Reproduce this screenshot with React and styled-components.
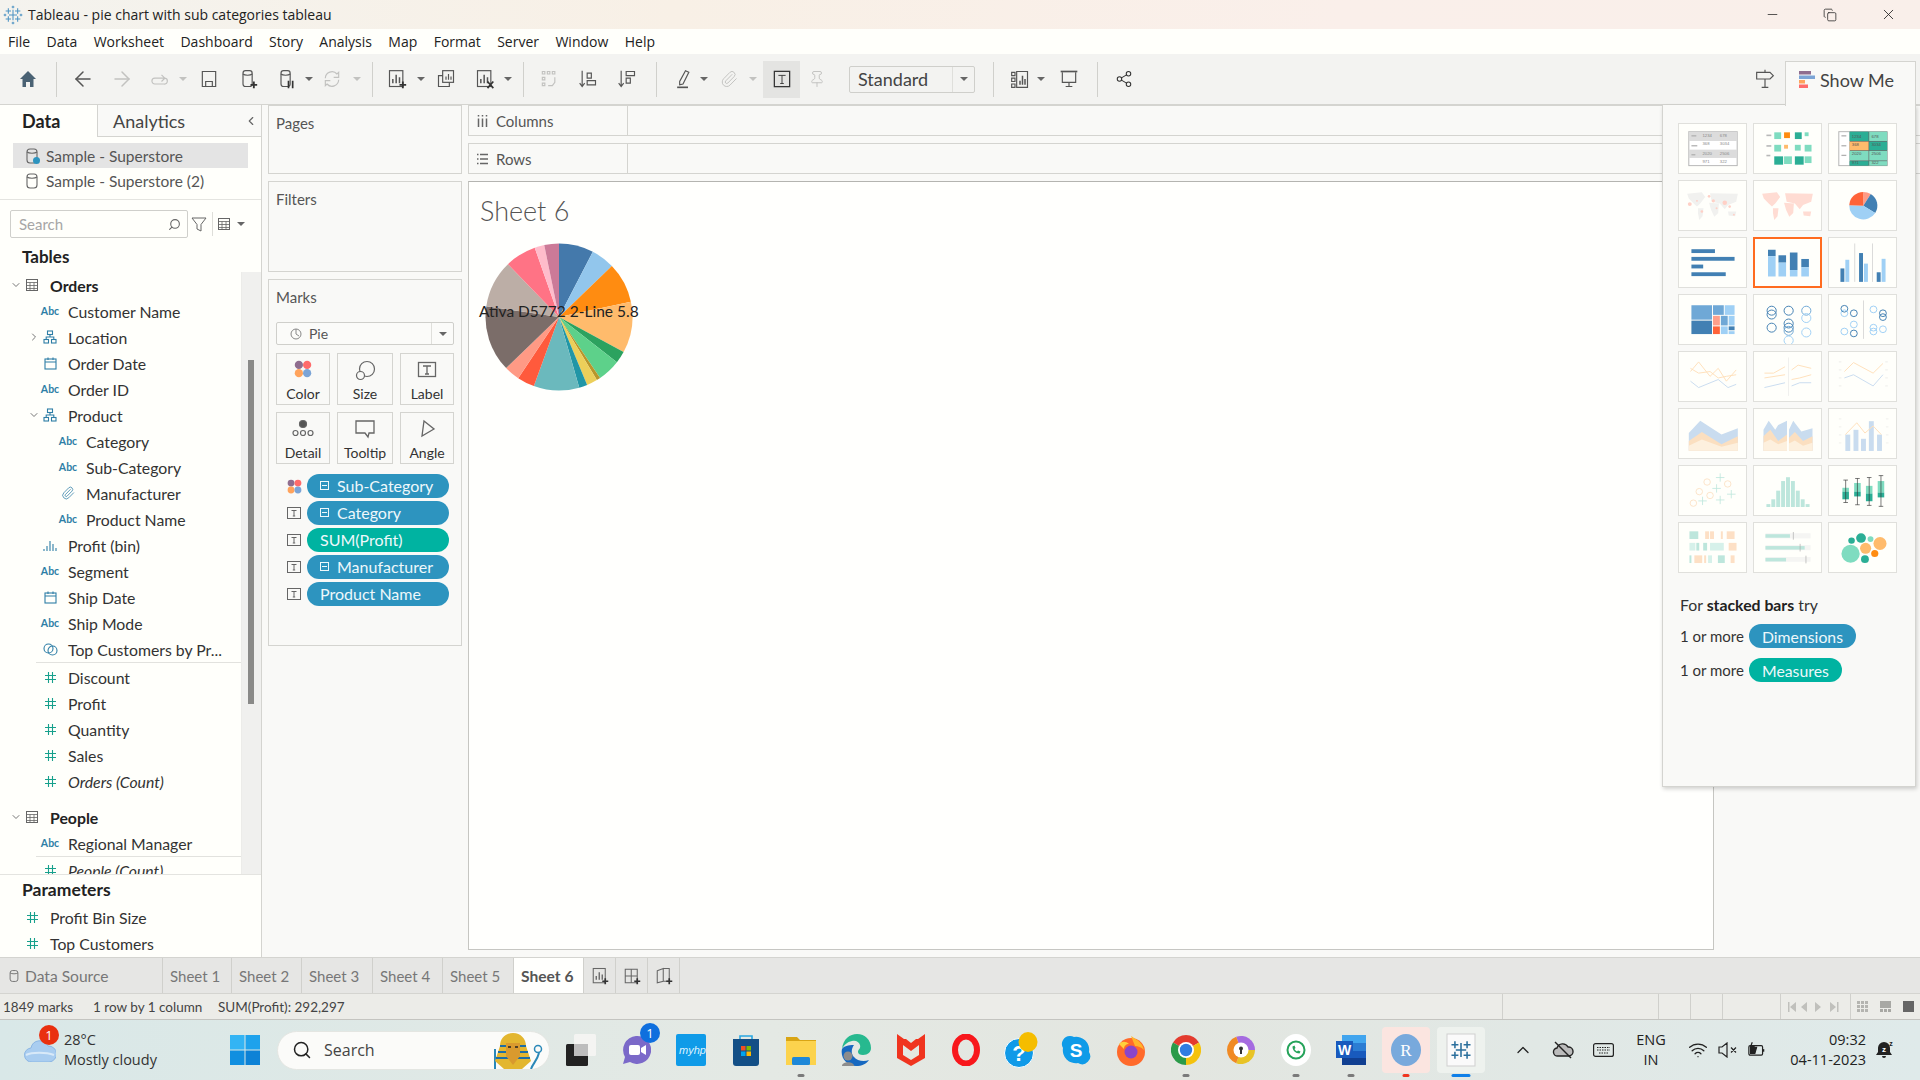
import styled, { createGlobalStyle } from "styled-components";
import {
  ArrowLeft, ArrowRight, ChevronDown, ChevronLeft, ChevronRight, ChevronUp, Copy, Minus, Paperclip,
  Pin, Search, Share2, Wifi, X,
} from "lucide-react";

const UI = `"Lato", "Liberation Sans", sans-serif`;
const SEGOE = `"Open Sans", "Liberation Sans", sans-serif`;

const GlobalStyle = createGlobalStyle`
  html, body { margin: 0; padding: 0; width: 1920px; height: 1080px; overflow: hidden; background: #f9f9f7; }
  * { box-sizing: border-box; }
  body { font-family: ${UI}; color: #333; }
`;

const Screen = styled.div`
  position: relative;
  width: 1920px;
  height: 1080px;
  display: flex;
  flex-direction: column;
  overflow: hidden;
`;

const TitleBar = styled.div`
  height: 29px;
  flex: none;
  display: flex;
  align-items: center;
  padding-left: 3px;
  background: linear-gradient(90deg, #f4f3ee 0%, #f8f0e6 35%, #faefea 70%, #f9efea 100%);
  font: 14px ${SEGOE};
  color: #222;
`;

const TitleText = styled.span`
  margin-left: 5px;
`;

const WinButtons = styled.div`
  margin-left: auto;
  display: flex;
  align-items: center;
  gap: 43px;
  padding-right: 23px;
  color: #222;
`;

const MenuBar = styled.div`
  height: 25px;
  flex: none;
  display: flex;
  align-items: center;
  gap: 16.4px;
  padding-left: 8px;
  background: #fffffb;
  font: 14px ${SEGOE};
  color: #222;
`;

const Toolbar = styled.div`
  height: 51px;
  flex: none;
  display: flex;
  align-items: center;
  background: #f3f3f1;
  border-bottom: 1px solid #d4d4d0;
  padding-right: 143px;
`;

const Tool = styled.div`
  flex: none;
  width: ${(p) => p.$w || 24}px;
  height: ${(p) => (p.$active ? 37 : 24)}px;
  margin-left: ${(p) => p.$ml || 0}px;
  display: flex;
  align-items: center;
  justify-content: center;
  background: ${(p) => (p.$active ? "#e4e4e2" : "transparent")};
  color: ${(p) => (p.$off ? "#c2c2c0" : p.$dark ? "#333" : "#555")};
`;

const ToolSep = styled.div`
  flex: none;
  width: 1px;
  height: 35px;
  margin-left: ${(p) => p.$ml}px;
  background: #d0d0cc;
`;

const Caret = styled.div`
  flex: none;
  width: 0;
  height: 0;
  margin-left: ${(p) => p.$ml + 1}px;
  margin-right: 1px;
  border-left: 4px solid transparent;
  border-right: 4px solid transparent;
  border-top: 4px solid ${(p) => (p.$off ? "#c2c2c0" : "#666")};
`;

const StandardBox = styled.div`
  flex: none;
  width: 126px;
  height: 27px;
  margin-left: 20px;
  display: flex;
  align-items: center;
  border: 1px solid #cfcfcb;
  border-radius: 2px;
  font-size: 18px;
  color: #444;
`;

const StandardText = styled.span`
  flex: 1;
  padding-left: 8px;
`;

const BoxCaret = styled.div`
  width: 22px;
  height: 100%;
  display: flex;
  align-items: center;
  justify-content: center;
  border-left: 1px solid #dfdfdb;
`;

const GuideTool = styled(Tool)`
  margin-left: auto;
`;

const Main = styled.div`
  flex: 1;
  min-height: 0;
  display: flex;
`;

const DataPane = styled.aside`
  width: 262px;
  flex: none;
  display: flex;
  flex-direction: column;
  background: #fffffb;
  border-right: 1px solid #d4d4d0;
`;

const PaneTabs = styled.div`
  height: 32px;
  flex: none;
  display: flex;
  font-size: 18px;
`;

const PaneTab = styled.div`
  width: ${(p) => p.$w}px;
  display: flex;
  align-items: center;
  padding-left: ${(p) => p.$pad}px;
  font-weight: ${(p) => (p.$on ? 700 : 400)};
  color: ${(p) => (p.$on ? "#222" : "#444")};
  background: ${(p) => (p.$on ? "#fffffb" : "#f9f9f7")};
  border-right: ${(p) => (p.$on ? "1px solid #d4d4d0" : "0")};
  border-bottom: ${(p) => (p.$on ? "0" : "1px solid #d4d4d0")};
`;

const Collapse = styled.span`
  margin-left: auto;
  margin-right: 3px;
  color: #666;
  display: flex;
`;

const SourceList = styled.div`
  height: 63px;
  flex: none;
  padding: 6px 13px 0;
  border-bottom: 1px solid #e4e4e0;
`;

const SourceRow = styled.div`
  height: 25px;
  display: flex;
  align-items: center;
  gap: 5px;
  padding-left: 10px;
  font-size: 15.5px;
  color: #555;
  background: ${(p) => (p.$on ? "#e4e4e4" : "transparent")};
`;

const SearchRow = styled.div`
  height: 28px;
  flex: none;
  margin-top: 10px;
  padding-left: 10px;
  display: flex;
  align-items: center;
`;

const SearchBox = styled.div`
  width: 178px;
  height: 28px;
  display: flex;
  align-items: center;
  justify-content: space-between;
  padding: 0 6px 0 8px;
  border: 1px solid #cfcfcb;
  border-radius: 2px;
  font-size: 15px;
  color: #a6a6a6;
`;

const SearchTail = styled.div`
  margin-left: 3px;
  display: flex;
  align-items: center;
  gap: 5px;
`;

const VLine = styled.div`
  width: 1px;
  height: 24px;
  background: #deded9;
`;

const TablesHead = styled.div`
  height: 34px;
  flex: none;
  display: flex;
  align-items: center;
  padding: 2px 0 0 22px;
  font-size: 17px;
  font-weight: 700;
  color: #222;
`;

const Scroller = styled.div`
  height: 602px;
  flex: none;
  display: flex;
  overflow: hidden;
`;

const FieldList = styled.div`
  width: 241px;
  flex: none;
`;

const Track = styled.div`
  width: 20px;
  flex: none;
  background: #f0f0ee;
  border-left: 1px solid #ecece9;
`;

const Thumb = styled.div`
  width: 6px;
  height: 344px;
  margin: 88px 0 0 6px;
  background: #8a8a88;
`;

const Row = styled.div`
  height: 26px;
  display: flex;
  align-items: center;
  padding-left: ${(p) => p.$pad}px;
  font-size: 15.8px;
  color: #333;
  white-space: nowrap;
  font-style: ${(p) => (p.$italic ? "italic" : "normal")};
`;

const HeadRow = styled(Row)`
  font-weight: 700;
  color: #222;
  margin-top: ${(p) => p.$mt || 0}px;
`;

const Chev = styled.span`
  width: 13px;
  flex: none;
  display: flex;
  justify-content: center;
  color: #777;
`;

const Slot = styled.span`
  width: 20px;
  flex: none;
  margin-right: 8px;
  display: flex;
  justify-content: center;
  align-items: center;
  color: #2e7ea6;
`;

const AbcMark = styled.span`
  font: 700 10.5px ${UI};
  font-style: normal;
  color: #2e7ea6;
`;

const Rule = styled.div`
  height: 1px;
  margin-left: 36px;
  background: #e2e2de;
  margin-bottom: ${(p) => p.$mb || 0}px;
`;

const Params = styled.div`
  flex: 1;
  border-top: 1px solid #e4e4e0;
`;

const ParamsHead = styled.div`
  height: 29px;
  display: flex;
  align-items: center;
  padding-left: 22px;
  font-size: 17.5px;
  font-weight: 700;
  color: #222;
`;

const MiddleCol = styled.div`
  width: 194px;
  flex: none;
  margin-left: 6px;
  display: flex;
  flex-direction: column;
  gap: 7px;
`;

const Card = styled.section`
  height: ${(p) => p.$h}px;
  flex: none;
  padding: 8px 7px 0 7px;
  background: #f9f9f7;
  border: 1px solid #d4d4d0;
  font-size: 15.5px;
  color: #555;
`;

const CardLabel = styled.div`
  height: 18px;
  line-height: 18px;
  font-size: 15px;
`;

const MarksType = styled.div`
  height: 23px;
  margin-top: 16px;
  display: flex;
  align-items: center;
  border: 1px solid #cfcfcb;
  border-radius: 2px;
  background: #fbfbf9;
  font-size: 14px;
  color: #555;
`;

const MarksTypeName = styled.div`
  flex: 1;
  display: flex;
  align-items: center;
  gap: 7px;
  padding-left: 13px;
`;

const MarksGrid = styled.div`
  margin-top: 8px;
  display: grid;
  grid-template-columns: 54px 56px 54px;
  grid-auto-rows: 52px;
  column-gap: 7px;
  row-gap: 7px;
`;

const MarkButton = styled.div`
  display: flex;
  flex-direction: column;
  align-items: center;
  justify-content: space-between;
  padding: 6px 0 2px;
  border: 1px solid #d4d4d0;
  font-size: 14px;
  color: #333;
`;

const PillList = styled.div`
  margin-top: 10px;
  display: flex;
  flex-direction: column;
  gap: 3px;
`;

const PillRow = styled.div`
  height: 24px;
  display: flex;
  align-items: center;
  padding-left: 11px;
`;

const PillIcon = styled.span`
  width: 20px;
  flex: none;
  display: flex;
`;

const Pill = styled.div`
  width: 142px;
  height: 24px;
  display: flex;
  align-items: center;
  gap: 8px;
  padding: 0 0 1px 13px;
  border-radius: 12px;
  background: ${(p) => (p.$measure ? "#00b3a1" : "#2d94bf")};
  color: #eef8fb;
  font-size: 16px;
  white-space: nowrap;
`;

const MinusBox = styled.span`
  width: 9px;
  height: 9px;
  flex: none;
  border: 1px solid #eef8fb;
  display: flex;
  align-items: center;
  justify-content: center;
  &::before {
    content: "";
    width: 5px;
    height: 1px;
    background: #eef8fb;
  }
`;

const Workspace = styled.div`
  flex: 1;
  min-width: 0;
  margin-left: 6px;
  display: flex;
  flex-direction: column;
  gap: 7px;
`;

const Shelf = styled.div`
  height: 31px;
  flex: none;
  display: flex;
  background: #f9f9f7;
  border-top: 1px solid #d4d4d0;
  border-bottom: 1px solid #d4d4d0;
  border-left: 1px solid #d4d4d0;
`;

const ShelfName = styled.div`
  width: 159px;
  display: flex;
  align-items: center;
  gap: 8px;
  padding-left: 8px;
  font-size: 15px;
  color: #555;
  border-right: 1px solid #d4d4d0;
`;

const ViewSheet = styled.main`
  width: 1246px;
  height: 769px;
  flex: none;
  padding: 11px 11px;
  background: #fffffd;
  border: 1px solid #c6c6c2;
  border-top-color: #b4b4b0;
`;

const SheetTitle = styled.h1`
  margin: 0;
  height: 38px;
  font: 300 27px/36px ${UI};
  color: #555;
`;

const PieWrap = styled.div`
  position: relative;
  width: 150px;
  height: 150px;
  margin: 12px 0 0 4px;
`;

const PieLabel = styled.div`
  position: absolute;
  left: -5px;
  top: 59px;
  white-space: nowrap;
  font-size: 15.5px;
  line-height: 18px;
  color: #222;
`;

const ShowMe = styled.div`
  position: absolute;
  left: 1662px;
  top: 105px;
  width: 254px;
  height: 682px;
  padding: 18px 0 0 15px;
  background: #f9f9f7;
  border-right: 1px solid #d4d4d0;
  border-left: 1px solid #d4d4d0;
  border-bottom: 1px solid #d4d4d0;
  box-shadow: 1px 2px 4px rgba(0, 0, 0, 0.18);
`;

const ShowMeTab = styled.div`
  position: absolute;
  right: -1px;
  top: -44px;
  width: 131px;
  height: 45px;
  display: flex;
  align-items: center;
  gap: 5px;
  padding: 0 0 8px 13px;
  background: #f9f9f7;
  border: 1px solid #d4d4d0;
  border-bottom: 0;
  font-size: 18px;
  color: #444;
`;

const ThumbGrid = styled.div`
  display: grid;
  grid-template-columns: repeat(3, 69px);
  grid-auto-rows: 51px;
  column-gap: 6px;
  row-gap: 6px;
`;

const ThumbCell = styled.div`
  border: ${(p) => (p.$on ? "2px solid #ff6b1f" : "1px solid #e0e0dc")};
  background: #fffffb;
  overflow: hidden;
  svg { display: block; width: 100%; height: 100%; }
`;

const Hint = styled.div`
  margin: 22px 0 0 2px;
  font-size: 15.8px;
  color: #333;
  b { font-weight: 700; color: #222; }
`;

const HintRow = styled.div`
  height: 24px;
  margin-top: ${(p) => p.$mt}px;
  display: flex;
  align-items: center;
  gap: 5px;
  font-size: 15px;
`;

const HintPill = styled.span`
  height: 24px;
  padding: 0 13px;
  display: flex;
  align-items: center;
  border-radius: 12px;
  background: ${(p) => (p.$measure ? "#00b3a1" : "#2d94bf")};
  color: #eef8fb;
  font-size: 15.8px;
`;

const TabBar = styled.div`
  height: 37px;
  flex: none;
  display: flex;
  background: #e6e6e4;
  border-top: 1px solid #d4d4d0;
  border-bottom: 1px solid #d4d4d0;
`;

const SheetTab = styled.div`
  width: ${(p) => p.$w}px;
  flex: none;
  display: flex;
  align-items: center;
  justify-content: ${(p) => (p.$icon ? "center" : "flex-start")};
  gap: 4px;
  padding-left: ${(p) => (p.$icon ? 0 : 7)}px;
  font-size: ${(p) => (p.$on || p.$wide ? 15.6 : 15)}px;
  font-weight: ${(p) => (p.$on ? 700 : 400)};
  color: ${(p) => (p.$on ? "#555" : "#777")};
  background: ${(p) => (p.$on ? "#fffffd" : "transparent")};
  border-right: 1px solid #d0d0cc;
`;

const StatusBar = styled.div`
  height: 26px;
  flex: none;
  display: flex;
  align-items: center;
  padding-left: 3px;
  background: #ecece8;
  border-bottom: 1px solid #c4c4c0;
  font-size: 13.5px;
  color: #444;
`;

const StatusText = styled.span`
  width: ${(p) => p.$w}px;
  flex: none;
`;

const StatusCell = styled.div`
  width: ${(p) => p.$w}px;
  height: 100%;
  flex: none;
  display: flex;
  align-items: center;
  justify-content: center;
  gap: 12px;
  border-left: 1px solid #d0d0cc;
  margin-left: ${(p) => (p.$auto ? "auto" : 0)};
`;

const Taskbar = styled.footer`
  height: 60px;
  flex: none;
  display: flex;
  align-items: center;
  background: linear-gradient(90deg, #d9e8e8 0%, #e4e9e4 40%, #e3e6e0 60%, #dfeaea 100%);
  font-family: ${SEGOE};
  color: #222;
`;

const Weather = styled.div`
  position: relative;
  width: 230px;
  flex: none;
  height: 100%;
  display: flex;
  align-items: center;
  padding-left: 24px;
  gap: 8px;
`;

const WeatherText = styled.div`
  font-size: 14.5px;
  line-height: 20px;
  color: #333;
`;

const RedBadge = styled.span`
  position: absolute;
  left: 39px;
  top: 5px;
  width: 20px;
  height: 20px;
  border-radius: 50%;
  background: #e9300f;
  color: #fff;
  font-size: 13px;
  text-align: center;
  line-height: 20px;
`;

const BlueBadge = styled.span`
  position: absolute;
  right: 3px;
  top: 3px;
  width: 20px;
  height: 20px;
  border-radius: 50%;
  background: #0f6fde;
  color: #fff;
  font-size: 13px;
  text-align: center;
  line-height: 20px;
`;

const StartSlot = styled.div`
  width: 47px;
  flex: none;
  display: flex;
`;

const SearchPill = styled.div`
  width: 273px;
  height: 39px;
  flex: none;
  display: flex;
  align-items: center;
  gap: 12px;
  padding: 0 6px 0 14px;
  background: #fbfbf9;
  border-radius: 20px;
  border: 1px solid #e4e6e2;
  font-size: 16px;
  color: #444;
`;

const PharaohWrap = styled.span`
  margin-left: auto;
  display: flex;
`;

const TaskIcons = styled.div`
  display: flex;
  margin-left: 3px;
`;

const TaskIcon = styled.div`
  position: relative;
  width: 55px;
  height: 60px;
  flex: none;
  display: flex;
  align-items: center;
  justify-content: center;
  &::before {
    content: "";
    display: ${(p) => (p.$hi ? "block" : "none")};
    position: absolute;
    left: 4px;
    right: 3px;
    top: 7px;
    bottom: 7px;
    border-radius: 4px;
    background: ${(p) => (p.$hi === "red" ? "#fbe5e0" : "#eef2ee")};
  }
  svg { position: relative; }
  &::after {
    content: "";
    display: ${(p) => (p.$dot ? "block" : "none")};
    position: absolute;
    left: 50%;
    bottom: 3px;
    width: ${(p) => (p.$dot === "blue" ? 19 : 7)}px;
    height: 3px;
    transform: translateX(-50%);
    border-radius: 2px;
    background: ${(p) => (p.$dot === "blue" ? "#0f7fe8" : p.$dot === "red" ? "#f0341f" : "#7a7a7a")};
  }
`;

const Tray = styled.div`
  margin-left: auto;
  display: flex;
  align-items: center;
  padding-right: 16px;
`;

const TrayIcon = styled.span`
  width: ${(p) => p.$w}px;
  flex: none;
  display: flex;
  justify-content: center;
  color: #222;
`;

const Lang = styled.div`
  width: 74px;
  flex: none;
  text-align: center;
  font-size: 14.5px;
  line-height: 20px;
`;

const Clock = styled.div`
  width: 100px;
  flex: none;
  text-align: right;
  font-size: 14.5px;
  line-height: 20px;
`;

/* ---- small drawings ---- */

const Ico = ({ size = 20, vb = 24, children, ...rest }) => (
  <svg width={size} height={size} viewBox={`0 0 ${vb} ${vb}`} fill="none" stroke="currentColor" strokeWidth="1.4" {...rest}>
    {children}
  </svg>
);

const Cyl = ({ size = 18, check }) => (
  <Ico size={size} vb={18} stroke="#666" strokeWidth="1.1">
    <rect x="4" y="2" width="10" height="14" rx="3" />
    <path d="M4 5c2 1.6 8 1.6 10 0" />
    {check && <circle cx="13.500" cy="13.500" r="3.500" fill="#2d94bf" stroke="none" />}
  </Ico>
);

const Plus = () => <path d="M15 19h8M19 15v8" stroke="#333" strokeWidth="2.200" />;

const SheetGlyph = () => (
  <>
    <rect x="3" y="2" width="16" height="19" />
    <path d="M7 17v-5M11 17V7M15 17v-7" strokeWidth="1.800" />
  </>
);

const Dots = ({ size = 24 }) => (
  <svg width={size} height={size} viewBox="0 0 24 24">
    <circle cx="6.500" cy="6.500" r="5.500" fill="#8f6d8f" />
    <circle cx="17.500" cy="6.500" r="5.500" fill="#ff6b6b" />
    <circle cx="6.500" cy="17.500" r="5.500" fill="#ffa35c" />
    <circle cx="17.500" cy="17.500" r="5.500" fill="#7ba4d6" />
  </svg>
);

const TBox = ({ size = 14 }) => (
  <svg width={size} height={size} viewBox="0 0 14 14" fill="none" stroke="#666">
    <rect x=".5" y="1.500" width="13" height="11" />
    <path d="M4.500 4.500h5M7 4.500v5.500M5.800 10h2.400" />
  </svg>
);

const TableIcon = () => (
  <svg width="12" height="12" viewBox="0 0 12 12" fill="none" stroke="#666">
    <rect x=".5" y=".5" width="11" height="11" />
    <path d="M.5 3.500h11M.5 6.500h11M.5 9.500h11M4 3.500v8M8 3.500v8" strokeWidth=".8" />
  </svg>
);

const Hierarchy = () => (
  <svg width="14" height="14" viewBox="0 0 14 14" fill="none" stroke="#2e7ea6" strokeWidth="1.100">
    <rect x="4.500" y="1" width="5" height="3.500" />
    <rect x="1" y="9.500" width="4.500" height="3.500" />
    <rect x="8.500" y="9.500" width="4.500" height="3.500" />
    <path d="M7 4.500V7M3.200 9.500V7h7.600v2.500" />
  </svg>
);

const DateIcon = () => (
  <svg width="13" height="13" viewBox="0 0 13 13" fill="none" stroke="#2e7ea6" strokeWidth="1.100">
    <rect x="1" y="2" width="11" height="10" />
    <path d="M1 5h11M4 .5V3M9 .5V3" />
  </svg>
);

const BinIcon = () => (
  <svg width="15" height="12" viewBox="0 0 15 12" stroke="#2e7ea6" strokeWidth="1.100">
    <path d="M1 10v2M4 7v5M7 2v10M10 5v7M13 9v3" />
  </svg>
);

const SetIcon = () => (
  <svg width="15" height="13" viewBox="0 0 15 13" fill="none" stroke="#2e7ea6" strokeWidth="1.100">
    <circle cx="5.500" cy="5.500" r="4.500" />
    <circle cx="9.500" cy="7.500" r="4.500" />
  </svg>
);

const HashIcon = () => (
  <svg width="11" height="11" viewBox="0 0 11 11" stroke="#17a08c" strokeWidth="1.100">
    <path d="M3.500 0v11M7.500 0v11M0 3.500h11M0 7.500h11" />
  </svg>
);

const FieldIcon = ({ kind }) => {
  if (kind === "abc") return <AbcMark>Abc</AbcMark>;
  if (kind === "num") return <HashIcon />;
  if (kind === "date") return <DateIcon />;
  if (kind === "hier") return <Hierarchy />;
  if (kind === "clip") return <Paperclip size={14} strokeWidth={1.3} />;
  if (kind === "bin") return <BinIcon />;
  return <SetIcon />;
};

const Field = ({ kind, name, sub, chev, italic }) => (
  <Row $pad={sub ? 45 : 27} $italic={italic}>
    <Chev>
      {chev === "right" && <ChevronRight size={12} />}
      {chev === "down" && <ChevronDown size={12} />}
    </Chev>
    <Slot>
      <FieldIcon kind={kind} />
    </Slot>
    {name}
  </Row>
);

const TableHead = ({ name, mt }) => (
  <HeadRow $pad={9} $mt={mt}>
    <Chev>
      <ChevronDown size={12} />
    </Chev>
    <Slot>
      <TableIcon />
    </Slot>
    {name}
  </HeadRow>
);

const Param = ({ name }) => (
  <Row $pad={22}>
    <Slot>
      <HashIcon />
    </Slot>
    {name}
  </Row>
);

const pol = (cx, cy, r, deg) => {
  const a = ((deg - 90) * Math.PI) / 180;
  return [cx + r * Math.cos(a), cy + r * Math.sin(a)];
};

const wedge = (cx, cy, r, from, to) => {
  const [x1, y1] = pol(cx, cy, r, from);
  const [x2, y2] = pol(cx, cy, r, to);
  return `M${cx} ${cy}L${x1} ${y1}A${r} ${r} 0 ${to - from > 180 ? 1 : 0} 1 ${x2} ${y2}Z`;
};

const pieSlices = [
  [27.4, "#4479ab"], [46, "#92c6ec"], [78, "#ff8c11"], [118.5, "#ffbb6c"], [128, "#2ca25f"],
  [146, "#5dd18a"], [149, "#b8962a"], [157.5, "#eccf5a"], [164, "#2196a6"], [200, "#6bb9bd"],
  [213.7, "#ff5a3c"], [226, "#ff9a85"], [278.5, "#7b6d69"], [316, "#bcaea6"], [340.7, "#ff7385"],
  [348.4, "#ffbccb"], [360, "#cc7a98"],
];

const PieChart = () => (
  <svg width="150" height="150" viewBox="0 0 150 150">
    {pieSlices.map(([end, color], i) => (
      <path key={color} d={wedge(75, 74, 73.5, i ? pieSlices[i - 1][0] : 0, end)} fill={color} />
    ))}
  </svg>
);

/* ---- Show Me thumbnails, drawn in 3x units of the cell ---- */

const D = "#4280b3";
const L = "#9fd0f5";
const T1 = "#2bae95";
const T2 = "#7fdcc0";
const FB = "#c9dcef";
const FO = "#ffe0bb";
const FT = "#bde6dc";

const Th = ({ children, on }) => (
  <ThumbCell $on={on}>
    <svg viewBox="0 0 205 153" preserveAspectRatio="none">{children}</svg>
  </ThumbCell>
);

const Bars = ({ items }) =>
  items.map(([x, y, w, h, c]) => <rect key={`${x}-${y}`} x={x} y={y} width={w} height={h} fill={c} />);

const Rings = ({ items, r, sw = 3 }) =>
  items.map(([x, y, c]) => <circle key={`${x}-${y}`} cx={x} cy={y} r={r} fill="none" stroke={c} strokeWidth={sw} />);

const Lines = ({ items, sw = 3 }) =>
  items.map(([pts, c]) => <polyline key={pts} points={pts} fill="none" stroke={c} strokeWidth={sw} />);

const WorldShape = ({ fill }) => (
  <path
    fill={fill}
    d="M25 40L70 35L80 50L65 70L55 80L45 70L30 55ZM58 85L75 85L72 110L62 122L58 100ZM95 38L180 40L175 65L150 75L140 88L125 70L100 65ZM92 68L122 70L120 100L108 112L98 90ZM150 95L175 95L172 110L152 108Z"
  />
);

const tableNums = [
  ["1234", "678", 30], ["368", "3034", 55], ["2020", "2506", 84], ["971", "322", 110],
];

const thumbs = [
  <Th key="t1">
    <rect x="30" y="24" width="148" height="106" fill="#fff" stroke="#b5b5b5" strokeWidth="3" />
    <Bars items={[[30, 24, 148, 29, "#dcdcdc"], [30, 80, 148, 26, "#dcdcdc"], [38, 35, 15, 4, "#b0b0b0"], [38, 66, 18, 4, "#b0b0b0"], [38, 94, 12, 4, "#b0b0b0"]]} />
    {tableNums.map(([a, b, y]) => (
      <g key={a} fontSize="13" fill="#888" fontFamily="Liberation Sans">
        <text x="72" y={y + 12}>{a}</text>
        <text x="125" y={y + 12}>{b}</text>
      </g>
    ))}
  </Th>,
  <Th key="t2">
    <Bars items={[
      [38, 33, 15, 5, "#b8b8b8"], [38, 66, 15, 5, "#b8b8b8"], [38, 96, 12, 5, "#b8b8b8"],
      [62, 26, 21, 21, T2], [92, 26, 18, 18, "#ff8c11"], [125, 26, 21, 21, T1], [155, 26, 12, 12, T2],
      [62, 65, 21, 21, T2], [92, 65, 12, 12, "#ffbb6c"], [125, 65, 18, 18, T2], [155, 65, 21, 21, T2],
      [62, 101, 27, 26, T1], [92, 101, 24, 24, T2], [125, 101, 27, 26, T1], [155, 101, 21, 21, T2],
    ]} />
  </Th>,
  <Th key="t3">
    <rect x="30" y="24" width="148" height="106" fill="#fff" stroke="#b5b5b5" strokeWidth="3" />
    <Bars items={[
      [38, 35, 15, 4, "#b0b0b0"], [38, 66, 15, 4, "#b0b0b0"], [38, 96, 15, 4, "#b0b0b0"],
      [63, 24, 115, 106, "#666"],
      [63, 24, 58, 29, T1], [123, 24, 55, 29, T2], [63, 55, 58, 27, "#ffbb6c"], [123, 55, 55, 27, T1],
      [63, 84, 58, 30, T2], [123, 84, 55, 30, T2], [63, 116, 58, 14, T1], [123, 116, 55, 14, T2],
    ]} />
    {tableNums.map(([a, b, y]) => (
      <g key={a} fontSize="13" fill="#555" fontFamily="Liberation Sans">
        <text x="70" y={y + 14}>{a}</text>
        <text x="130" y={y + 14}>{b}</text>
      </g>
    ))}
  </Th>,
  <Th key="t4">
    <WorldShape fill="#f1f1ef" />
    {[[33, 72, 6], [55, 62, 3], [92, 48, 4], [105, 62, 5], [140, 68, 7], [155, 80, 4], [70, 95, 4], [168, 105, 3], [115, 85, 3]].map(([x, y, r]) => (
      <circle key={x} cx={x} cy={y} r={r} fill="#ffd0c6" />
    ))}
  </Th>,
  <Th key="t5"><WorldShape fill="#ffdcd3" /></Th>,
  <Th key="t6">
    <path d={wedge(105, 77, 43, 0, 32)} fill="#ff9a85" />
    <path d={wedge(105, 77, 43, 32, 122)} fill={D} />
    <path d={wedge(105, 77, 43, 122, 272)} fill={L} />
    <path d={wedge(105, 77, 43, 272, 360)} fill="#ff6339" />
  </Th>,
  <Th key="t7">
    <Bars items={[[38, 35, 72, 12, D], [38, 59, 132, 12, D], [38, 83, 36, 12, D], [38, 107, 105, 12, D]]} />
  </Th>,
  <Th key="t8" on>
    <Bars items={[
      [41, 35, 24, 21, D], [41, 56, 24, 66, L], [74, 53, 24, 24, D], [74, 77, 24, 45, L],
      [110, 44, 24, 57, D], [110, 101, 24, 21, L], [146, 65, 24, 27, D], [146, 92, 24, 30, L],
    ]} />
  </Th>,
  <Th key="t9">
    <Bars items={[
      [78, 17, 2, 120, "#c8c8c8"], [132, 17, 2, 120, "#c8c8c8"],
      [35, 95, 12, 42, D], [50, 68, 12, 69, L], [92, 47, 12, 90, D], [107, 80, 12, 57, L],
      [146, 107, 12, 30, D], [161, 65, 12, 72, L],
    ]} />
  </Th>,
  <Th key="t10">
    <Bars items={[
      [38, 32, 63, 45, "#6fa8d6"], [104, 32, 33, 30, "#6fa8d6"], [140, 32, 30, 30, L], [38, 80, 63, 42, D],
      [104, 65, 21, 30, "#ff9f8a"], [128, 65, 21, 30, "#6fa8d6"], [152, 65, 18, 30, L],
      [104, 98, 21, 24, "#ff6339"], [128, 98, 21, 24, L], [152, 98, 18, 12, D], [152, 113, 18, 9, L],
    ]} />
  </Th>,
  <Th key="t11">
    <Rings r={14} items={[
      [54, 49, D], [54, 61, D], [106, 49, D], [54, 102, D], [106, 89, D], [106, 102, D], [106, 112, "#6fa8d6"],
      [160, 49, "#6fa8d6"], [160, 72, L], [160, 117, L], [106, 142, L],
    ]} />
  </Th>,
  <Th key="t12">
    <rect x="104" y="17" width="2" height="120" fill="#c8c8c8" />
    <Rings r={10.500} items={[
      [47, 43, D], [47, 57, L], [76, 57, D], [47, 114, L], [76, 92, L], [76, 120, D],
      [136, 45, L], [165, 57, D], [165, 69, D], [136, 102, L], [136, 114, L], [165, 107, L],
    ]} />
  </Th>,
  <Th key="t13">
    <Lines items={[
      ["35,61 60,31 95,76 120,51 145,91 175,56", FO], ["35,51 60,66 95,61 120,81 145,76 175,71", FO], ["35,91 60,111 120,86 150,111 175,101", FB],
    ]} />
  </Th>,
  <Th key="t14">
    <rect x="104" y="17" width="2" height="120" fill="#e8e8e6" />
    <Lines items={[
      ["32,66 60,66 95,46", FO], ["32,81 95,71", FO], ["32,111 95,96", FB],
      ["115,56 135,41 175,51", FO], ["115,86 140,81 175,71", FO], ["115,106 140,96 175,96", FB],
    ]} />
  </Th>,
  <Th key="t15">
    <Bars items={[[30, 30, 8, 2, "#e4e4e2"], [30, 55, 8, 2, "#e4e4e2"], [30, 80, 8, 2, "#e4e4e2"], [30, 105, 8, 2, "#e4e4e2"], [172, 30, 8, 2, "#e4e4e2"], [172, 55, 8, 2, "#e4e4e2"], [172, 80, 8, 2, "#e4e4e2"], [172, 105, 8, 2, "#e4e4e2"]]} />
    <Lines items={[["47,61 75,33 135,66 165,36", FO], ["47,81 75,71 135,106 165,71", FB]]} />
  </Th>,
  <Th key="t16">
    <polygon points="30,75 65,37 130,80 180,60 180,130 30,130" fill={FB} />
    <polygon points="30,100 70,72 130,110 180,85 180,130 30,130" fill="#fbdfc0" />
    <polygon points="30,115 70,95 130,118 180,105 180,130 30,130" fill="#fdf0de" />
  </Th>,
  <Th key="t17">
    <polygon points="29,65 45,37 65,65 74,50 101,37 101,130 29,130" fill={FB} />
    <polygon points="29,85 50,65 74,100 101,80 101,130 29,130" fill="#fbdfc0" />
    <polygon points="29,105 50,95 74,110 101,100 101,130 29,130" fill="#fdf0de" />
    <polygon points="107,65 120,37 145,70 179,60 179,130 107,130" fill={FB} />
    <polygon points="107,90 125,72 150,100 179,85 179,130 107,130" fill="#fbdfc0" />
    <polygon points="107,108 125,98 150,115 179,105 179,130 107,130" fill="#fdf0de" />
  </Th>,
  <Th key="t18">
    <Bars items={[
      [30, 30, 8, 2, "#e8e8e6"], [30, 55, 8, 2, "#e8e8e6"], [30, 80, 8, 2, "#e8e8e6"], [30, 105, 8, 2, "#e8e8e6"],
      [174, 30, 8, 2, "#e8e8e6"], [174, 55, 8, 2, "#e8e8e6"], [174, 80, 8, 2, "#e8e8e6"], [174, 105, 8, 2, "#e8e8e6"],
      [50, 80, 15, 51, FB], [75, 65, 15, 66, FB], [98, 93, 15, 38, FB], [122, 38, 15, 93, FB], [147, 80, 15, 51, FB],
    ]} />
    <Lines items={[["50,80 85,43 110,75 135,53 160,80", FO]]} />
  </Th>,
  <Th key="t19">
    <Rings r={10} sw={2.500} items={[[86, 50, "#fbdfc0"], [149, 56, "#fbdfc0"], [62, 80, "#fbdfc0"], [95, 92, "#fbdfc0"], [44, 116, "#fbdfc0"]]} />
    <g stroke={FT} strokeWidth="2.500">
      {[[126, 36], [115, 70], [160, 88], [126, 106], [72, 109]].map(([x, y]) => (
        <path key={x} d={`M${x - 13} ${y}h26M${x} ${y - 13}v26`} />
      ))}
    </g>
  </Th>,
  <Th key="t20">
    <Bars items={[
      [38, 119, 12, 9, FT], [53, 104, 12, 24, FT], [68, 77, 12, 51, FT], [83, 47, 12, 81, FT], [98, 35, 12, 93, FT],
      [113, 47, 12, 81, FT], [128, 77, 12, 51, FT], [143, 104, 12, 24, FT], [158, 119, 12, 9, FT],
    ]} />
  </Th>,
  <Th key="t21">
    {[[51, 44, 114, 68, 80, 104], [87, 39, 121, 53, 80, 95], [123, 36, 123, 62, 86, 110], [159, 30, 126, 47, 83, 98]].map(([x, top, bot, a, b, c]) => (
      <g key={x}>
        <rect x={x - 10} y={a} width="20" height={b - a} fill={T2} />
        <rect x={x - 10} y={b} width="20" height={c - b} fill={T1} />
        <path d={`M${x} ${top}V${bot}M${x - 7} ${top}h14M${x - 7} ${bot}h14`} stroke="#333" strokeWidth="2" />
      </g>
    ))}
  </Th>,
  <Th key="t22">
    <Bars items={[
      [32, 26, 27, 24, FT], [80, 26, 12, 24, "#fde0c5"], [95, 26, 12, 24, "#fde0c5"], [128, 26, 6, 24, "#fde0c5"], [146, 26, 24, 24, "#fde0c5"],
      [32, 62, 18, 24, "#d6f1ea"], [53, 62, 9, 24, FT], [74, 62, 12, 24, FT], [95, 62, 42, 24, "#d6f1ea"], [152, 62, 24, 24, "#fde0c5"],
      [32, 101, 6, 24, FT], [47, 101, 24, 24, "#fde0c5"], [77, 101, 6, 24, "#fde0c5"], [89, 101, 12, 24, "#d6f1ea"], [119, 101, 21, 24, FT], [158, 101, 12, 24, "#fde0c5"],
    ]} />
  </Th>,
  <Th key="t23">
    <Bars items={[
      [35, 32, 138, 16, "#f5f5f3"], [35, 69, 138, 16, "#f5f5f3"], [35, 106, 138, 15, "#f5f5f3"],
      [35, 35, 75, 11, FT], [35, 72, 120, 11, FT], [35, 109, 63, 11, FT],
      [119, 28, 2, 24, "#aaa"], [140, 65, 2, 24, "#aaa"], [158, 102, 2, 24, "#aaa"],
    ]} />
  </Th>,
  <Th key="t24">
    {[[66, 96, 28, T2], [69, 55, 10, T1], [98, 47, 15, T1], [110, 113, 12, T1], [127, 50, 9, T2], [112, 79, 17, "#ffbb6c"], [156, 64, 20, "#ffbb6c"], [140, 95, 11, "#ff8c11"]].map(([x, y, r, c]) => (
      <circle key={x} cx={x} cy={y} r={r} fill={c} />
    ))}
  </Th>,
];

/* ---- taskbar app icons ---- */

const AppMyHp = () => (
  <svg width="30" height="32" viewBox="0 0 30 32">
    <rect width="30" height="32" rx="2" fill="#0f9be8" />
    <text x="3" y="20" fontSize="11" fontStyle="italic" fill="#dff3ff" fontFamily="Liberation Sans">myhp</text>
  </svg>
);

const AppStore = () => (
  <svg width="30" height="34" viewBox="0 0 30 34">
    <path d="M9 6V3h12v3" fill="none" stroke="#29a7e1" strokeWidth="1.600" />
    <path d="M2 6h26v24a3 3 0 0 1-3 3H5a3 3 0 0 1-3-3Z" fill="#134f86" />
    <rect x="10" y="13" width="4.500" height="4.500" fill="#f25022" />
    <rect x="15.500" y="13" width="4.500" height="4.500" fill="#7fba00" />
    <rect x="10" y="18.500" width="4.500" height="4.500" fill="#00a4ef" />
    <rect x="15.500" y="18.500" width="4.500" height="4.500" fill="#ffb900" />
  </svg>
);

const AppFolder = () => (
  <svg width="30" height="30" viewBox="0 0 30 30">
    <path d="M0 2h11l3 3h16v6H0Z" fill="#d9a514" />
    <rect y="6" width="30" height="24" fill="#fcd34d" />
    <rect x="6" y="22" width="18" height="8" rx="1.500" fill="#1e88d8" />
  </svg>
);

const AppEdge = () => (
  <svg width="30" height="32" viewBox="0 0 30 32">
    <path d="M1 15C2 5 9 0 16 0c8 0 14 6 14 14 0 4-3 7-8 7-3 0-5-1-5-3 0-3 3-3 2-7-1-3-4-5-8-4-5 1-8 4-10 8Z" fill="#27b98f" />
    <path d="M1 15c-2 9 5 17 14 17 6 0 10-2 13-6-5 2-12 1-15-3-3-3-3-8 0-12C7 11 3 12 1 15Z" fill="#1668c0" />
    <circle cx="7" cy="22" r="4.500" fill="#8c8c8c" />
    <path d="M1 32c0-5 12-5 12 0Z" fill="#8c8c8c" />
  </svg>
);

const AppMcafee = () => (
  <svg width="28" height="32" viewBox="0 0 28 32">
    <path d="M0 0l7 5h2l5 4 5-4h2l7-5v24l-14 8L0 24Zm6 11v10l8 5 8-5V11l-8 6Z" fill="#f0341f" fillRule="evenodd" />
  </svg>
);

const AppOpera = () => (
  <svg width="28" height="32" viewBox="0 0 28 32">
    <ellipse cx="14" cy="16" rx="11" ry="13.500" fill="none" stroke="#f8171c" strokeWidth="6" />
  </svg>
);

const AppHelp = () => (
  <svg width="34" height="36" viewBox="0 0 34 36">
    <circle cx="15" cy="21" r="14.500" fill="#109ae8" stroke="#fff" strokeWidth="1" />
    <text x="15" y="29" textAnchor="middle" fontSize="22" fontWeight="700" fill="#fff" fontFamily="Liberation Sans">?</text>
    <ellipse cx="24" cy="10" rx="9.500" ry="10" fill="#f5bd00" />
  </svg>
);

const AppSkype = () => (
  <svg width="30" height="30" viewBox="0 0 30 30">
    <path d="M9 1a8 8 0 0 1 4 1 13 13 0 0 1 15 15 8 8 0 0 1-11 11A13 13 0 0 1 2 13 8 8 0 0 1 9 1Z" fill="#0f9be8" />
    <text x="15" y="22" textAnchor="middle" fontSize="19" fontWeight="700" fill="#fff" fontFamily="Liberation Sans">S</text>
  </svg>
);

const AppFirefox = () => (
  <svg width="28" height="32" viewBox="0 0 28 32">
    <circle cx="14" cy="18" r="14" fill="#ff6a2b" />
    <path d="M14 2c4 3 11 5 13 14-3-3-6-4-9-4Z" fill="#ffb52b" />
    <circle cx="14" cy="18" r="6.500" fill="#8b45c9" />
    <path d="M2 10c3-3 7-3 10 0-3 0-5 2-5 5Z" fill="#ffd23c" />
  </svg>
);

const AppChrome = () => (
  <svg width="30" height="32" viewBox="0 0 30 32">
    <path d={wedge(15, 16, 15, -60, 60)} fill="#e33b2e" />
    <path d={wedge(15, 16, 15, 60, 180)} fill="#f4c20d" />
    <path d={wedge(15, 16, 15, 180, 300)} fill="#2a9a48" />
    <circle cx="15" cy="16" r="8" fill="#fff" />
    <circle cx="15" cy="16" r="6.200" fill="#2f7de1" />
  </svg>
);

const AppShield = () => (
  <svg width="28" height="30" viewBox="0 0 28 30">
    <path d={wedge(14, 15, 14, -20, 90)} fill="#a56be0" />
    <path d={wedge(14, 15, 14, 90, 200)} fill="#e8c326" />
    <path d={wedge(14, 15, 14, 200, 340)} fill="#f08a24" />
    <circle cx="14" cy="15" r="7.500" fill="#fff" />
    <circle cx="14" cy="13.500" r="2" fill="#333" />
    <rect x="13" y="14" width="2" height="5" fill="#333" />
  </svg>
);

const AppWhatsapp = () => (
  <svg width="30" height="32" viewBox="0 0 30 32">
    <ellipse cx="15" cy="16" rx="15" ry="16" fill="#fff" />
    <circle cx="15" cy="16" r="8.500" fill="none" stroke="#25a35a" strokeWidth="2" />
    <path d="M11.500 12.500c0 4 3 7 7 7l1-2-2.500-1-1 1c-1-.5-2-1.500-2.500-2.500l1-1-1-2.500Z" fill="#25a35a" />
  </svg>
);

const AppWord = () => (
  <svg width="30" height="30" viewBox="0 0 30 30">
    <rect x="6" width="24" height="8" fill="#41a5ee" />
    <rect x="6" y="8" width="24" height="8" fill="#2b7cd3" />
    <rect x="6" y="16" width="24" height="7" fill="#185abd" />
    <rect x="6" y="23" width="24" height="7" fill="#103f91" />
    <rect y="6" width="17" height="17" fill="#185abd" />
    <text x="8.500" y="20" textAnchor="middle" fontSize="14" fontWeight="700" fill="#fff" fontFamily="Liberation Sans">W</text>
  </svg>
);

const AppR = () => (
  <svg width="30" height="32" viewBox="0 0 30 32">
    <ellipse cx="15" cy="16" rx="15" ry="16" fill="#78a9dc" />
    <text x="15" y="22" textAnchor="middle" fontSize="17" fill="#fff" fontFamily="Liberation Serif">R</text>
  </svg>
);

const TableauCross = ({ size = 30, c = "#2b6f9c" }) => (
  <svg width={size} height={size} viewBox="0 0 30 30" stroke={c} strokeWidth="1.600">
    <path d="M15 7v16M9 15h12M8 5v8M4 9h8M22 5v8M18 9h8M8 17v8M4 21h8M22 17v8M18 21h8M15 1v4M13 3h4M15 25v4M13 27h4M1 15h4M3 13v4M25 15h4M27 13v4" />
  </svg>
);

const AppTableau = () => (
  <svg width="32" height="36" viewBox="0 0 32 36">
    <rect x="2" y="2" width="28" height="32" fill="#fafafa" stroke="#cfcfcf" />
    <svg x="3" y="5" width="26" height="26" viewBox="0 0 30 30" stroke="#2b6f9c" strokeWidth="1.800">
      <path d="M15 7v16M9 15h12M8 5v8M4 9h8M22 5v8M18 9h8M8 17v8M4 21h8M22 17v8M18 21h8" />
    </svg>
  </svg>
);

const AppTaskView = () => (
  <svg width="30" height="32" viewBox="0 0 30 32">
    <rect x="8" y="0" width="22" height="22" rx="1.500" fill="#f4f4f2" />
    <rect x="0" y="10" width="22" height="22" rx="1.500" fill="#222" />
    <rect x="8" y="10" width="14" height="12" fill="#bdbdbd" />
  </svg>
);

const AppTeams = () => (
  <svg width="30" height="32" viewBox="0 0 30 32">
    <path d="M15 2a14 14 0 1 1-6 26l-7 2 2-7A14 14 0 0 1 15 2Z" fill="#7b69c9" />
    <rect x="8" y="11" width="11" height="10" rx="2" fill="#fff" />
    <path d="M20 14l5-3v10l-5-3Z" fill="#fff" />
  </svg>
);

const WinLogo = () => (
  <svg width="30" height="30" viewBox="0 0 30 30">
    <rect width="14.500" height="14.500" fill="#33b4f4" />
    <rect x="15.500" width="14.500" height="14.500" fill="#1ea2ec" />
    <rect y="15.500" width="14.500" height="14.500" fill="#118fe0" />
    <rect x="15.500" y="15.500" width="14.500" height="14.500" fill="#0d82d6" />
  </svg>
);

const Pharaoh = () => (
  <svg width="52" height="38" viewBox="0 0 52 38">
    <path d="M4 38V18M40 38c2-6 6-8 8-16" stroke="#2a88b8" strokeWidth="2" fill="none" />
    <circle cx="47" cy="18" r="3.500" fill="none" stroke="#2a88b8" strokeWidth="1.500" />
    <path d="M22 2c8 0 13 6 13 13l5 15-9 8H13l-9-8 5-15C9 8 14 2 22 2Z" fill="#e3b62f" />
    <path d="M9 15h26M7 21h30M5 27h34" stroke="#1e6ea5" strokeWidth="2.200" />
    <path d="M15 12h14v13l-7 9-7-9Z" fill="#d99a2e" />
    <path d="M17 16h3M24 16h3" stroke="#222" strokeWidth="1.600" />
  </svg>
);

const CloudGlyph = () => (
  <svg width="32" height="24" viewBox="0 0 32 24">
    <path d="M8 24a7 7 0 0 1-1-14 9 9 0 0 1 17-2 8 8 0 0 1 1 16Z" fill="#a9cdf0" stroke="#8bb6e4" />
    <path d="M2 17c6-3 20-3 28 0" stroke="#d8e9f8" strokeWidth="2" fill="none" />
  </svg>
);

const ShowMeMark = () => (
  <svg width="16" height="18" viewBox="0 0 16 18">
    <rect width="12" height="3.500" fill="#8f6d8f" />
    <rect y="4.500" width="16" height="3.500" fill="#7ba4d6" />
    <rect y="9" width="6" height="3.500" fill="#ffa35c" />
    <rect y="13.500" width="9" height="3.500" fill="#ff6b6b" />
  </svg>
);

const menuItems = ["File", "Data", "Worksheet", "Dashboard", "Story", "Analysis", "Map", "Format", "Server", "Window", "Help"];

const App = () => (
  <Screen>
    <GlobalStyle />
    <TitleBar>
      <TableauCross size={20} c="#4d94c4" />
      <TitleText>Tableau - pie chart with sub categories tableau</TitleText>
      <WinButtons>
        <Minus size={15} strokeWidth={1.2} />
        <Copy size={14} strokeWidth={1.3} />
        <X size={17} strokeWidth={1.2} />
      </WinButtons>
    </TitleBar>

    <MenuBar>
      {menuItems.map((m) => (
        <span key={m}>{m}</span>
      ))}
    </MenuBar>

    <Toolbar>
      <Tool $ml={16}>
        <svg width="18" height="18" viewBox="0 0 18 18" fill="#4a6274">
          <path d="M9 1L1 9h2.500v8H7v-5h4v5h3.500V9H17Z" />
        </svg>
      </Tool>
      <ToolSep $ml={16} />
      <Tool $ml={14}><ArrowLeft size={24} strokeWidth={1.5} /></Tool>
      <Tool $ml={15} $off><ArrowRight size={24} strokeWidth={1.5} /></Tool>
      <Tool $ml={13} $off>
        <Ico><path d="M19 11H7a3.500 3.500 0 0 0 0 7h11a3 3 0 0 0 1-7M15 7l4 4-4 4" /></Ico>
      </Tool>
      <Caret $ml={7} $off />
      <Tool $ml={9}>
        <Ico><path d="M4 3h16v18H4Z" /><path d="M8 21v-6h8v6" /></Ico>
      </Tool>
      <Tool $ml={15}>
        <Ico><rect x="6" y="2" width="11" height="19" rx="3" /><path d="M6 6c2 2 9 2 11 0" /><Plus /></Ico>
      </Tool>
      <Tool $ml={14}>
        <Ico><rect x="6" y="2" width="11" height="19" rx="3" /><path d="M6 6c2 2 9 2 11 0" /><path d="M15 14v9M20 14v9" strokeWidth="2" stroke="#333" /></Ico>
      </Tool>
      <Caret $ml={6} />
      <Tool $ml={6} $off>
        <Ico><path d="M4 11a8 8 0 0 1 14-5l2-2v6h-6M20 13a8 8 0 0 1-14 5l-2 2v-6h6" /></Ico>
      </Tool>
      <Caret $ml={8} $off />
      <ToolSep $ml={10} />
      <Tool $ml={12}><Ico><SheetGlyph /><Plus /></Ico></Tool>
      <Caret $ml={7} />
      <Tool $ml={8}>
        <Ico><rect x="8" y="2" width="13" height="14" /><path d="M12 13V9M15 13V6M18 13V9" /><path d="M8 8H3v13h13v-5" /></Ico>
      </Tool>
      <Tool $ml={15}>
        <Ico><SheetGlyph /><path d="M15 15l7 8M22 15l-7 8" stroke="#333" strokeWidth="2" /></Ico>
      </Tool>
      <Caret $ml={6} />
      <ToolSep $ml={10} />
      <Tool $ml={13} $off>
        <Ico><path d="M4 3h3v3H4ZM10 3h3v3h-3ZM16 3h3v3h-3ZM4 10h3v3H4ZM4 17h3v3H4ZM19 10v6l-3 4h-5" /></Ico>
      </Tool>
      <Tool $ml={15}>
        <Ico><path d="M5 2v18M2 17l3 4 3-4" /><path d="M11 5h5v6h-5ZM11 14h10v5H11Z" /></Ico>
      </Tool>
      <Tool $ml={15}>
        <Ico><path d="M5 2v18M2 17l3 4 3-4" /><path d="M11 3h10v5H11ZM11 11h5v6h-5Z" /></Ico>
      </Tool>
      <ToolSep $ml={17} />
      <Tool $ml={14}>
        <Ico><path d="M15 2l4 2-7 14-4 1 0-4Z" /><path d="M5 22h13" strokeWidth="2" /></Ico>
      </Tool>
      <Caret $ml={4} />
      <Tool $ml={8} $off><Paperclip size={18} strokeWidth={1.3} /></Tool>
      <Caret $ml={7} $off />
      <Tool $ml={5} $w={37} $active>
        <Ico size={18} vb={20} stroke="#333">
          <rect x="1.500" y="1.500" width="17" height="17" />
          <path d="M6 6h8M10 6v9M8 15h4" strokeWidth="1" />
        </Ico>
      </Tool>
      <Tool $ml={5} $off><Pin size={18} strokeWidth={1.3} /></Tool>
      <StandardBox>
        <StandardText>Standard</StandardText>
        <BoxCaret><Caret $ml={0} /></BoxCaret>
      </StandardBox>
      <ToolSep $ml={18} />
      <Tool $ml={14}>
        <Ico><path d="M2 4h4v4H2ZM2 11h4v4H2ZM2 18h4v4H2ZM8 3h13v19H8Z" /><path d="M12 19v-5M15 19V8M18 19v-7" strokeWidth="1.800" /></Ico>
      </Tool>
      <Caret $ml={4} />
      <Tool $ml={11}>
        <Ico><path d="M2 3h20" strokeWidth="2" /><path d="M4 4v12h16V4M12 16v5M8 21h8" /></Ico>
      </Tool>
      <ToolSep $ml={16} />
      <Tool $ml={14} $dark><Share2 size={18} strokeWidth={1.4} /></Tool>
      <GuideTool>
        <Ico><path d="M2 4h16l4 4-4 4H2Z" /><path d="M12 1v3M12 12v10M8 22h8" /></Ico>
      </GuideTool>
    </Toolbar>

    <Main>
      <DataPane>
        <PaneTabs>
          <PaneTab $on $w={98} $pad={22}>Data</PaneTab>
          <PaneTab $w={163} $pad={15}>
            Analytics
            <Collapse><ChevronLeft size={14} /></Collapse>
          </PaneTab>
        </PaneTabs>
        <SourceList>
          <SourceRow $on><Cyl check />Sample - Superstore</SourceRow>
          <SourceRow><Cyl />Sample - Superstore (2)</SourceRow>
        </SourceList>
        <SearchRow>
          <SearchBox>
            Search
            <Search size={13} color="#666" style={{ transform: "scaleX(-1)" }} />
          </SearchBox>
          <SearchTail>
            <svg width="16" height="16" viewBox="0 0 16 16" fill="none" stroke="#666">
              <path d="M1 2h14L10 8.500V15l-4-2V8.500Z" />
            </svg>
            <VLine />
            <TableIcon />
            <Caret $ml={1} />
          </SearchTail>
        </SearchRow>
        <TablesHead>Tables</TablesHead>
        <Scroller>
          <FieldList>
            <TableHead name="Orders" />
            <Field kind="abc" name="Customer Name" />
            <Field kind="hier" name="Location" chev="right" />
            <Field kind="date" name="Order Date" />
            <Field kind="abc" name="Order ID" />
            <Field kind="hier" name="Product" chev="down" />
            <Field kind="abc" name="Category" sub />
            <Field kind="abc" name="Sub-Category" sub />
            <Field kind="clip" name="Manufacturer" sub />
            <Field kind="abc" name="Product Name" sub />
            <Field kind="bin" name="Profit (bin)" />
            <Field kind="abc" name="Segment" />
            <Field kind="date" name="Ship Date" />
            <Field kind="abc" name="Ship Mode" />
            <Field kind="set" name="Top Customers by Pr..." />
            <Rule $mb={1} />
            <Field kind="num" name="Discount" />
            <Field kind="num" name="Profit" />
            <Field kind="num" name="Quantity" />
            <Field kind="num" name="Sales" />
            <Field kind="num" name="Orders (Count)" italic />
            <TableHead name="People" mt={10} />
            <Field kind="abc" name="Regional Manager" />
            <Rule />
            <Field kind="num" name="People (Count)" italic />
          </FieldList>
          <Track><Thumb /></Track>
        </Scroller>
        <Params>
          <ParamsHead>Parameters</ParamsHead>
          <Param name="Profit Bin Size" />
          <Param name="Top Customers" />
        </Params>
      </DataPane>

      <MiddleCol>
        <Card $h={69}><CardLabel>Pages</CardLabel></Card>
        <Card $h={91}><CardLabel>Filters</CardLabel></Card>
        <Card $h={367}>
          <CardLabel>Marks</CardLabel>
          <MarksType>
            <MarksTypeName>
              <svg width="12" height="12" viewBox="0 0 12 12" fill="none" stroke="#888">
                <circle cx="6" cy="6" r="5" /><path d="M6 1v5l3 2" />
              </svg>
              Pie
            </MarksTypeName>
            <BoxCaret><Caret $ml={0} /></BoxCaret>
          </MarksType>
          <MarksGrid>
            <MarkButton><Dots size={18} />Color</MarkButton>
            <MarkButton>
              <svg width="22" height="22" viewBox="0 0 22 22" fill="none" stroke="#666" strokeWidth="1.200">
                <circle cx="13" cy="9" r="7.500" /><circle cx="6.500" cy="15.500" r="4" fill="#f9f9f7" />
              </svg>
              Size
            </MarkButton>
            <MarkButton>
              <svg width="20" height="20" viewBox="0 0 20 20" fill="none" stroke="#666" strokeWidth="1.300">
                <rect x="1.500" y="2.500" width="17" height="14" /><path d="M6 6h8M10 6v8M8 14h4" />
              </svg>
              Label
            </MarkButton>
            <MarkButton>
              <svg width="22" height="20" viewBox="0 0 22 20" fill="none" stroke="#666" strokeWidth="1.200">
                <circle cx="11" cy="5" r="3.500" fill="#555" />
                <circle cx="3.500" cy="14" r="2.500" /><circle cx="11" cy="14" r="2.500" /><circle cx="18.500" cy="14" r="2.500" />
              </svg>
              Detail
            </MarkButton>
            <MarkButton>
              <svg width="22" height="20" viewBox="0 0 22 20" fill="none" stroke="#666" strokeWidth="1.300">
                <path d="M2 2h18v12h-5l-1 4-3-4H2Z" />
              </svg>
              Tooltip
            </MarkButton>
            <MarkButton>
              <svg width="18" height="20" viewBox="0 0 18 20" fill="none" stroke="#666" strokeWidth="1.300">
                <path d="M6 2l10 8-12 7Z" />
              </svg>
              Angle
            </MarkButton>
          </MarksGrid>
          <PillList>
            <PillRow><PillIcon><Dots size={15} /></PillIcon><Pill><MinusBox />Sub-Category</Pill></PillRow>
            <PillRow><PillIcon><TBox /></PillIcon><Pill><MinusBox />Category</Pill></PillRow>
            <PillRow><PillIcon><TBox /></PillIcon><Pill $measure>SUM(Profit)</Pill></PillRow>
            <PillRow><PillIcon><TBox /></PillIcon><Pill><MinusBox />Manufacturer</Pill></PillRow>
            <PillRow><PillIcon><TBox /></PillIcon><Pill>Product Name</Pill></PillRow>
          </PillList>
        </Card>
      </MiddleCol>

      <Workspace>
        <Shelf>
          <ShelfName>
            <svg width="11" height="12" viewBox="0 0 11 12" stroke="#666" strokeWidth="1.500">
              <path d="M1.500 0v1.500M1.500 3.500V12M5.500 0v1.500M5.500 3.500V12M9.500 0v1.500M9.500 3.500V12" />
            </svg>
            Columns
          </ShelfName>
        </Shelf>
        <Shelf>
          <ShelfName>
            <svg width="11" height="12" viewBox="0 0 11 12" stroke="#666" strokeWidth="1.500">
              <path d="M0 1.500h1.500M3 1.500h8M0 6h1.500M3 6h8M0 10.500h1.500M3 10.500h8" />
            </svg>
            Rows
          </ShelfName>
        </Shelf>
        <ViewSheet>
          <SheetTitle>Sheet 6</SheetTitle>
          <PieWrap>
            <PieChart />
            <PieLabel>Ativa D5772 2-Line 5.8</PieLabel>
          </PieWrap>
        </ViewSheet>
      </Workspace>
    </Main>

    <TabBar>
      <SheetTab $w={163} $wide><Cyl size={14} />Data Source</SheetTab>
      <SheetTab $w={69}>Sheet 1</SheetTab>
      <SheetTab $w={70}>Sheet 2</SheetTab>
      <SheetTab $w={71}>Sheet 3</SheetTab>
      <SheetTab $w={70}>Sheet 4</SheetTab>
      <SheetTab $w={71}>Sheet 5</SheetTab>
      <SheetTab $w={70} $on>Sheet 6</SheetTab>
      <SheetTab $w={32} $icon><Ico size={18} stroke="#666"><SheetGlyph /><Plus /></Ico></SheetTab>
      <SheetTab $w={32} $icon>
        <Ico size={18} stroke="#666"><path d="M3 3h16v18H3ZM3 12h16M11 3v18" /><Plus /></Ico>
      </SheetTab>
      <SheetTab $w={32} $icon>
        <Ico size={18} stroke="#666"><path d="M3 5l8-3v17l-8 2ZM11 2h8v17h-8" /><Plus /></Ico>
      </SheetTab>
    </TabBar>

    <StatusBar>
      <StatusText $w={90}>1849 marks</StatusText>
      <StatusText $w={125}>1 row by 1 column</StatusText>
      <StatusText $w={200}>SUM(Profit): 292,297</StatusText>
      <StatusCell $w={156} $auto />
      <StatusCell $w={32} />
      <StatusCell $w={32} />
      <StatusCell $w={58} />
      <StatusCell $w={70}>
        <svg width="56" height="10" viewBox="0 0 56 10" fill="#c0c0bc">
          <path d="M0 0h1.500v10H0ZM8 0v10L2 5ZM19 0v10L13 5ZM27 0l6 5-6 5ZM42 0l6 5-6 5ZM49 0h1.500v10H49Z" />
        </svg>
      </StatusCell>
      <StatusCell $w={70}>
        <svg width="11" height="11" viewBox="0 0 11 11" fill="#b4b4b0">
          <path d="M0 0h3v3H0ZM4 0h3v3H4ZM8 0h3v3H8ZM0 4h3v3H0ZM4 4h3v3H4ZM8 4h3v3H8ZM0 8h3v3H0ZM4 8h3v3H4ZM8 8h3v3H8Z" />
        </svg>
        <svg width="11" height="11" viewBox="0 0 11 11" fill="#a8a8a4">
          <path d="M0 0h11v7H0ZM0 8h3v3H0ZM4 8h3v3H4ZM8 8h3v3H8Z" />
        </svg>
        <svg width="11" height="11" viewBox="0 0 11 11" fill="#666"><path d="M0 0h11v11H0Z" /></svg>
      </StatusCell>
    </StatusBar>

    <Taskbar>
      <Weather>
        <CloudGlyph />
        <RedBadge>1</RedBadge>
        <WeatherText>
          28°C
          <br />
          Mostly cloudy
        </WeatherText>
      </Weather>
      <StartSlot><WinLogo /></StartSlot>
      <SearchPill>
        <Search size={20} strokeWidth={1.8} color="#222" />
        Search
        <PharaohWrap><Pharaoh /></PharaohWrap>
      </SearchPill>
      <TaskIcons>
        <TaskIcon><AppTaskView /></TaskIcon>
        <TaskIcon><AppTeams /><BlueBadge>1</BlueBadge></TaskIcon>
        <TaskIcon><AppMyHp /></TaskIcon>
        <TaskIcon><AppStore /></TaskIcon>
        <TaskIcon $dot="gray"><AppFolder /></TaskIcon>
        <TaskIcon><AppEdge /></TaskIcon>
        <TaskIcon><AppMcafee /></TaskIcon>
        <TaskIcon><AppOpera /></TaskIcon>
        <TaskIcon><AppHelp /></TaskIcon>
        <TaskIcon><AppSkype /></TaskIcon>
        <TaskIcon><AppFirefox /></TaskIcon>
        <TaskIcon $dot="gray"><AppChrome /></TaskIcon>
        <TaskIcon><AppShield /></TaskIcon>
        <TaskIcon $dot="gray"><AppWhatsapp /></TaskIcon>
        <TaskIcon $dot="gray"><AppWord /></TaskIcon>
        <TaskIcon $hi="red" $dot="red"><AppR /></TaskIcon>
        <TaskIcon $hi="plain" $dot="blue"><AppTableau /></TaskIcon>
      </TaskIcons>
      <Tray>
        <TrayIcon $w={22}><ChevronUp size={20} strokeWidth={1.5} /></TrayIcon>
        <TrayIcon $w={58}>
          <svg width="22" height="18" viewBox="0 0 22 18" fill="none" stroke="#222" strokeWidth="1.400">
            <path d="M6 15a4 4 0 0 1-1-8 6 6 0 0 1 11-1 4.500 4.500 0 0 1 1 9Z" fill="#bbb" /><path d="M3 1l16 16" />
          </svg>
        </TrayIcon>
        <TrayIcon $w={22}>
          <svg width="21" height="14" viewBox="0 0 21 14" fill="none" stroke="#222" strokeWidth="1.200">
            <rect x=".6" y=".6" width="19.800" height="12.800" rx="2" />
            <path d="M4 4.500h13M4 7h13M6 10h9" strokeDasharray="1.500 1" />
          </svg>
        </TrayIcon>
        <Lang>ENG<br />IN</Lang>
        <TrayIcon $w={20}><Wifi size={20} strokeWidth={1.6} /></TrayIcon>
        <TrayIcon $w={40}>
          <svg width="20" height="16" viewBox="0 0 20 16" fill="none" stroke="#222" strokeWidth="1.200">
            <path d="M1 5h3l5-4v14l-5-4H1ZM13 5.500l5 5M18 5.500l-5 5" />
          </svg>
        </TrayIcon>
        <TrayIcon $w={18}>
          <svg width="21" height="18" viewBox="0 0 21 18" fill="none" stroke="#222" strokeWidth="1.400">
            <rect x="1" y="4" width="16" height="11" rx="1.500" />
            <path d="M3 6h7l-2 7H3Z" fill="#222" /><path d="M18 8v3" strokeWidth="2" /><path d="M5 0L3 5h4l-2 5" />
          </svg>
        </TrayIcon>
        <Clock>09:32<br />04-11-2023</Clock>
        <TrayIcon $w={38}>
          <svg width="18" height="20" viewBox="0 0 18 20" fill="#222">
            <path d="M8 2a6 6 0 0 1 6 6v4l2 3H0l2-3V8a6 6 0 0 1 6-6ZM6 16h4a2 2 0 0 1-4 0Z" />
            <text x="8" y="12" textAnchor="middle" fontSize="8" fontWeight="700" fill="#fff" fontFamily="Liberation Sans">z</text>
            <text x="15" y="6" textAnchor="middle" fontSize="7" fontWeight="700" fontFamily="Liberation Sans">z</text>
          </svg>
        </TrayIcon>
      </Tray>
    </Taskbar>

    <ShowMe>
      <ShowMeTab><ShowMeMark />Show Me</ShowMeTab>
      <ThumbGrid>{thumbs}</ThumbGrid>
      <Hint>
        For <b>stacked bars</b> try
        <HintRow $mt={10}>1 or more<HintPill>Dimensions</HintPill></HintRow>
        <HintRow $mt={10}>1 or more<HintPill $measure>Measures</HintPill></HintRow>
      </Hint>
    </ShowMe>
  </Screen>
);

export default App;
